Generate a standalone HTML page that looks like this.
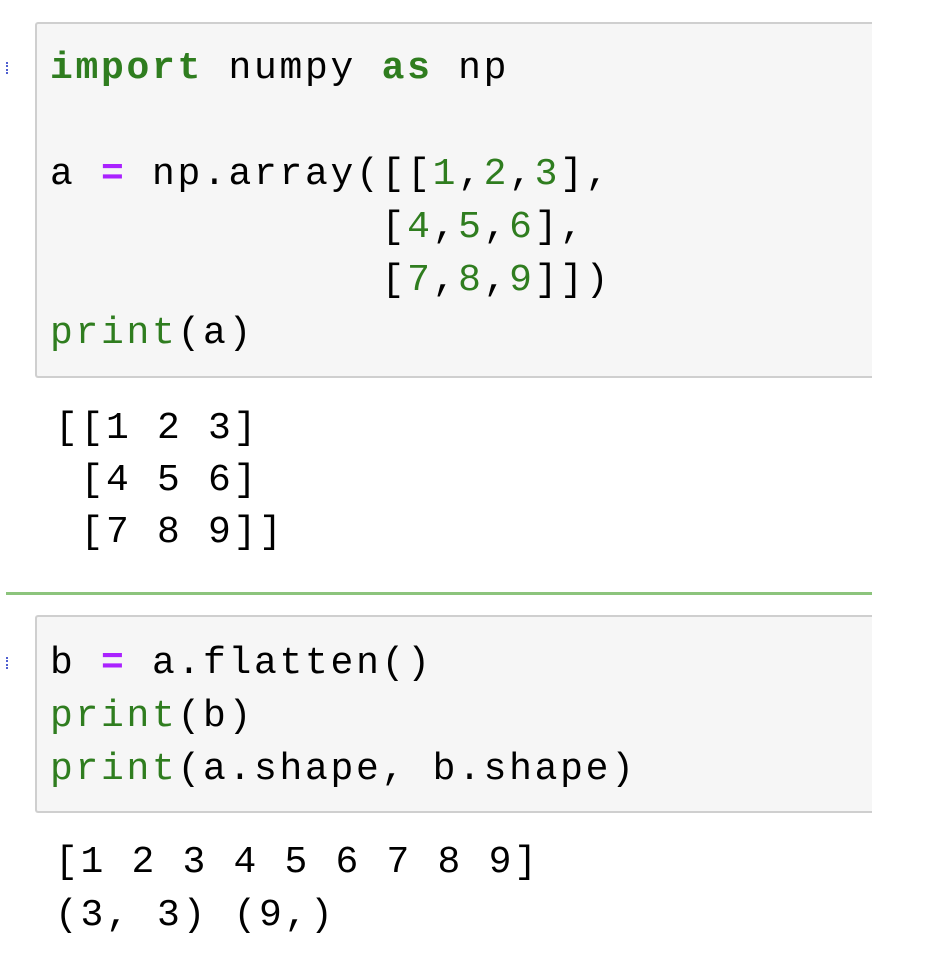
<!DOCTYPE html>
<html><head><meta charset="utf-8"><style>
html,body{margin:0;padding:0;background:#fff;width:943px;height:955px;overflow:hidden;position:relative}
.box{position:absolute;left:35px;width:837px;background:#f6f6f6;border:2px solid #cfcfcf;border-right:none;box-sizing:border-box;border-radius:3px 0 0 3px}
.l{position:absolute;left:50px;font-family:"Liberation Mono",monospace;font-size:38px;letter-spacing:2.7px;line-height:53px;height:53px;white-space:pre;color:#000}
.k{color:#2f7d1f;font-weight:bold}
.b{color:#2f7d1f}
.o{color:#aa22ff;font-weight:bold}
.n{color:#2f7d1f}
.dot{position:absolute;left:6px;width:2px;height:12px;border-left:2px dotted #5060d0}
</style></head><body>
<div class="dot" style="top:62px"></div>
<div class="box" style="top:22px;height:356px"></div>
<div class="l" style="top:42px"><span class="k">import</span> numpy <span class="k">as</span> np</div>
<div class="l" style="top:148px">a <span class="o">=</span> np.array([[<span class="n">1</span>,<span class="n">2</span>,<span class="n">3</span>],</div>
<div class="l" style="top:201px">             [<span class="n">4</span>,<span class="n">5</span>,<span class="n">6</span>],</div>
<div class="l" style="top:254px">             [<span class="n">7</span>,<span class="n">8</span>,<span class="n">9</span>]])</div>
<div class="l" style="top:307px"><span class="b">print</span>(a)</div>
<div class="l" style="top:402px;left:55px">[[1 2 3]</div>
<div class="l" style="top:454px;left:55px"> [4 5 6]</div>
<div class="l" style="top:506px;left:55px"> [7 8 9]]</div>
<div style="position:absolute;left:6px;top:592px;width:866px;height:3px;background:#8cc47c"></div>
<div class="dot" style="top:657px"></div>
<div class="box" style="top:615px;height:198px"></div>
<div class="l" style="top:637px">b <span class="o">=</span> a.flatten()</div>
<div class="l" style="top:690px"><span class="b">print</span>(b)</div>
<div class="l" style="top:743px"><span class="b">print</span>(a.shape, b.shape)</div>
<div class="l" style="top:836px;left:55px">[1 2 3 4 5 6 7 8 9]</div>
<div class="l" style="top:889px;left:55px">(3, 3) (9,)</div>
</body></html>
